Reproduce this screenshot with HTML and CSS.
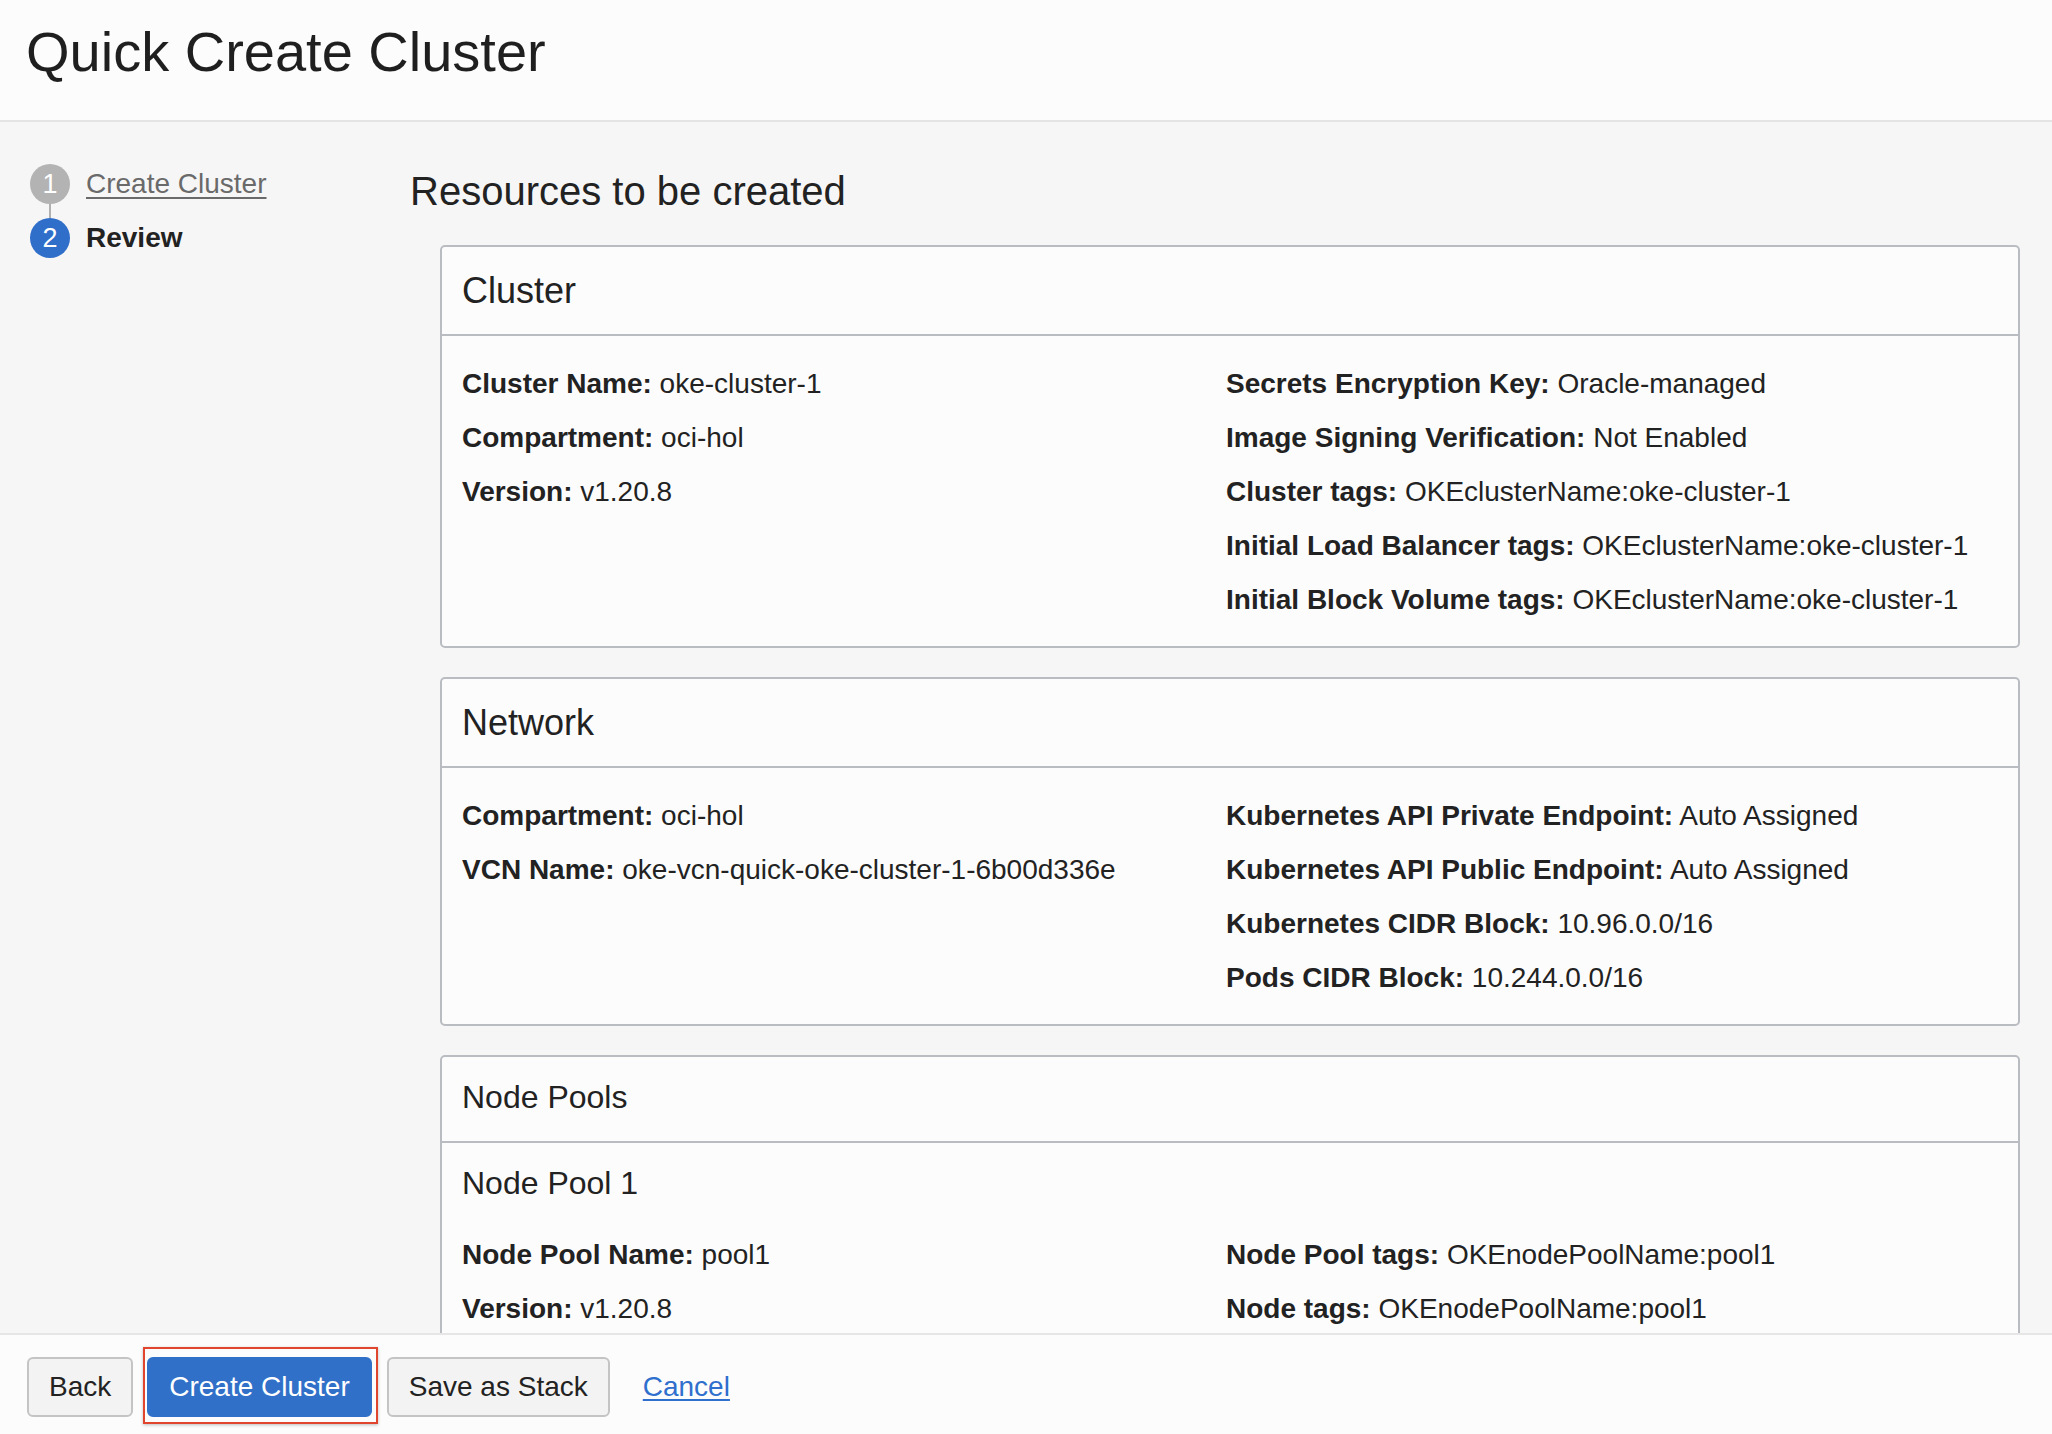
FILE: index.html
```html
<!DOCTYPE html>
<html lang="en">
<head>
<meta charset="utf-8">
<title>Quick Create Cluster</title>
<link rel="stylesheet" href="styles.css">
</head>
<body>
<div class="page">
  <header class="page-header">
    <h1 class="page-title">Quick Create Cluster</h1>
  </header>
  <div class="main">
    <nav class="steps">
      <div class="step">
        <span class="step-num step-num-done">1</span>
        <a class="step-link" href="#">Create Cluster</a>
      </div>
      <div class="step-connector"></div>
      <div class="step">
        <span class="step-num step-num-active">2</span>
        <span class="step-current">Review</span>
      </div>
    </nav>
    <section class="content">
      <h2 class="content-title">Resources to be created</h2>

      <div class="card">
        <div class="card-header">Cluster</div>
        <div class="card-body grid">
          <div class="col">
            <div class="row"><b>Cluster Name:</b> oke-cluster-1</div>
            <div class="row"><b>Compartment:</b> oci-hol</div>
            <div class="row"><b>Version:</b> v1.20.8</div>
          </div>
          <div class="col">
            <div class="row"><b>Secrets Encryption Key:</b> Oracle-managed</div>
            <div class="row"><b>Image Signing Verification:</b> Not Enabled</div>
            <div class="row"><b>Cluster tags:</b> OKEclusterName:oke-cluster-1</div>
            <div class="row"><b>Initial Load Balancer tags:</b> OKEclusterName:oke-cluster-1</div>
            <div class="row"><b>Initial Block Volume tags:</b> OKEclusterName:oke-cluster-1</div>
          </div>
        </div>
      </div>

      <div class="card">
        <div class="card-header">Network</div>
        <div class="card-body grid">
          <div class="col">
            <div class="row"><b>Compartment:</b> oci-hol</div>
            <div class="row"><b>VCN Name:</b> oke-vcn-quick-oke-cluster-1-6b00d336e</div>
          </div>
          <div class="col">
            <div class="row"><b>Kubernetes API Private Endpoint:</b> Auto Assigned</div>
            <div class="row"><b>Kubernetes API Public Endpoint:</b> Auto Assigned</div>
            <div class="row"><b>Kubernetes CIDR Block:</b> 10.96.0.0/16</div>
            <div class="row"><b>Pods CIDR Block:</b> 10.244.0.0/16</div>
          </div>
        </div>
      </div>

      <div class="card">
        <div class="card-header card-header-sm">Node Pools</div>
        <div class="card-body">
          <div class="subhead">Node Pool 1</div>
          <div class="grid">
            <div class="col">
              <div class="row"><b>Node Pool Name:</b> pool1</div>
              <div class="row"><b>Version:</b> v1.20.8</div>
            </div>
            <div class="col">
              <div class="row"><b>Node Pool tags:</b> OKEnodePoolName:pool1</div>
              <div class="row"><b>Node tags:</b> OKEnodePoolName:pool1</div>
            </div>
          </div>
        </div>
      </div>
    </section>
  </div>
  <footer class="page-footer">
    <button class="btn" type="button">Back</button>
    <button class="btn btn-primary btn-highlight" type="button">Create Cluster</button>
    <button class="btn" type="button">Save as Stack</button>
    <a class="cancel-link" href="#">Cancel</a>
  </footer>
</div>
</body>
</html>
```

FILE: styles.css
```css
* { box-sizing: border-box; }

html, body {
  margin: 0;
  padding: 0;
}

body {
  font-family: "Liberation Sans", Arial, sans-serif;
  color: #222;
  background: #f6f6f6;
}

.page {
  height: 100vh;
  display: flex;
  flex-direction: column;
  overflow: hidden;
}

.page-header {
  flex: none;
  height: 122px;
  background: #fcfcfc;
  border-bottom: 2px solid #e4e4e4;
  padding: 20px 0 0 26px;
}

.page-title {
  margin: 0;
  font-size: 56px;
  line-height: 64px;
  font-weight: normal;
  color: #1f1f1f;
}

.main {
  flex: 1;
  min-height: 0;
  display: flex;
  overflow: hidden;
}

.steps {
  flex: none;
  width: 410px;
  padding: 42px 0 0 30px;
  display: flex;
  flex-direction: column;
}

.step {
  display: flex;
  align-items: center;
  gap: 16px;
  height: 40px;
  font-size: 28px;
  line-height: 40px;
}

.step-num {
  width: 40px;
  height: 40px;
  border-radius: 50%;
  color: #fff;
  font-size: 27px;
  line-height: 40px;
  text-align: center;
  flex: none;
}

.step-num-done { background: #b3b3b3; }
.step-num-active { background: #2f6ec9; }

.step-connector {
  width: 2px;
  height: 14px;
  margin-left: 19px;
  background: #b0b0b0;
}

.step-link {
  color: #6a6a6a;
  text-decoration: underline;
  text-underline-offset: 4px;
}

.step-current {
  font-weight: bold;
  color: #222;
}

.content {
  flex: 1;
  min-width: 0;
  padding: 46px 32px 0 0;
}

.content-title {
  margin: 0 0 31px 0;
  font-size: 40px;
  line-height: 46px;
  font-weight: normal;
  color: #222;
}

.card {
  margin: 0 0 29px 30px;
  background: #fcfcfc;
  border: 2px solid #b9bdc2;
  border-radius: 5px;
}

.card-header {
  font-size: 36px;
  line-height: 42px;
  padding: 23px 20px 22px 20px;
  border-bottom: 2px solid #b9bdc2;
  color: #222;
}

.card-header-sm {
  font-size: 32px;
  line-height: 38px;
  padding: 21px 20px 25px 20px;
}

.card-body {
  padding: 21px 28px 19px 20px;
  font-size: 28px;
  line-height: 54px;
}

.grid {
  display: grid;
  grid-template-columns: 1fr 1fr;
}

.row b {
  font-weight: bold;
}

.subhead {
  font-size: 32px;
  line-height: 38px;
  margin: 0 0 26px 0;
}

.page-footer {
  flex: none;
  height: 101px;
  background: #fcfcfc;
  border-top: 2px solid #e6e6e6;
  padding: 22px 0 0 27px;
  display: flex;
  align-items: flex-start;
  gap: 14px;
}

.btn {
  position: relative;
  height: 60px;
  padding: 0 20px;
  font-family: "Liberation Sans", Arial, sans-serif;
  font-size: 28px;
  color: #222;
  background: #f3f3f3;
  border: 2px solid #c4c4c4;
  border-radius: 6px;
}

.btn-primary {
  background: #3070c8;
  border-color: #3070c8;
  color: #fff;
}

.btn-highlight {
  margin-right: 1px;
}

.btn-highlight::after {
  content: "";
  position: absolute;
  top: -12px;
  bottom: -9px;
  left: -6px;
  right: -8px;
  border: 2px solid #e2452e;
  box-shadow: 0 1px 3px rgba(0, 0, 0, 0.25);
  pointer-events: none;
}

.cancel-link {
  margin-left: 19px;
  font-size: 28px;
  line-height: 60px;
  color: #2f6fcd;
  text-decoration: underline;
  text-underline-offset: 3px;
}
```
